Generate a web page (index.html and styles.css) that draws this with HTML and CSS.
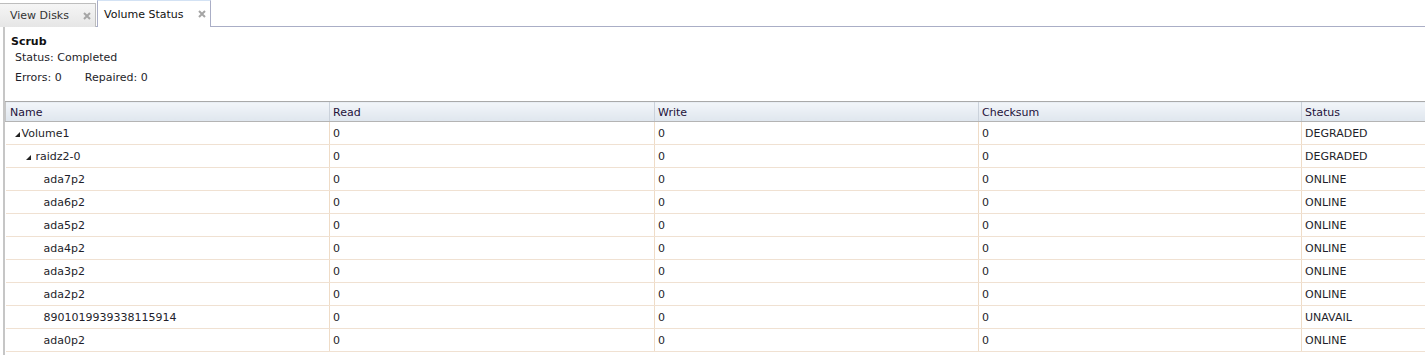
FILE: index.html
```html
<!DOCTYPE html>
<html>

<head>
    <meta charset="utf-8" />
    <title>Volume Status</title>
    <link rel="stylesheet" href="styles.css">
</head>

<body>
    <div class="tabs">
        <div class="tab">
            <span>View Disks</span>
            <svg class="close" width="8" height="8" viewBox="0 0 8 8"><path d="M1 1L7 7M7 1L1 7" /></svg>
        </div>
        <div class="tab active">
            <span>Volume Status</span>
            <svg class="close" width="8" height="8" viewBox="0 0 8 8"><path d="M1 1L7 7M7 1L1 7" /></svg>
        </div>
    </div>
    <div class="panel">
        <div class="summary">
            <div class="scrub">Scrub</div>
            <div class="status-line">Status: Completed</div>
            <div class="counts">
                <span>Errors: 0</span>
                <span>Repaired: 0</span>
            </div>
        </div>
        <table class="grid">
            <colgroup>
                <col class="c-name">
                <col class="c-read">
                <col class="c-write">
                <col class="c-sum">
                <col>
            </colgroup>
            <thead>
                <tr>
                    <th>Name</th>
                    <th>Read</th>
                    <th>Write</th>
                    <th>Checksum</th>
                    <th>Status</th>
                </tr>
            </thead>
            <tbody>
                <tr>
                    <td class="lvl0"><svg class="arrow" width="5" height="5" viewBox="0 0 5 5"><polygon points="5,0 5,5 0,5" /></svg>Volume1</td>
                    <td>0</td><td>0</td><td>0</td><td>DEGRADED</td>
                </tr>
                <tr>
                    <td class="lvl1"><svg class="arrow" width="5" height="5" viewBox="0 0 5 5"><polygon points="5,0 5,5 0,5" /></svg>raidz2-0</td>
                    <td>0</td><td>0</td><td>0</td><td>DEGRADED</td>
                </tr>
                <tr><td class="lvl2">ada7p2</td><td>0</td><td>0</td><td>0</td><td>ONLINE</td></tr>
                <tr><td class="lvl2">ada6p2</td><td>0</td><td>0</td><td>0</td><td>ONLINE</td></tr>
                <tr><td class="lvl2">ada5p2</td><td>0</td><td>0</td><td>0</td><td>ONLINE</td></tr>
                <tr><td class="lvl2">ada4p2</td><td>0</td><td>0</td><td>0</td><td>ONLINE</td></tr>
                <tr><td class="lvl2">ada3p2</td><td>0</td><td>0</td><td>0</td><td>ONLINE</td></tr>
                <tr><td class="lvl2">ada2p2</td><td>0</td><td>0</td><td>0</td><td>ONLINE</td></tr>
                <tr><td class="lvl2">8901019939338115914</td><td>0</td><td>0</td><td>0</td><td>UNAVAIL</td></tr>
                <tr><td class="lvl2">ada0p2</td><td>0</td><td>0</td><td>0</td><td>ONLINE</td></tr>
            </tbody>
        </table>
    </div>
</body>

</html>
```

FILE: styles.css
```css
* {
    box-sizing: border-box;
}

html,
body {
    margin: 0;
    height: 100%;
    overflow: hidden;
    background-color: #fff;
}

body {
    font-family: "DejaVu Sans", Verdana, sans-serif;
    font-size: 11px;
    color: #1e1e2a;
}

.tabs {
    display: flex;
    align-items: flex-end;
    height: 27px;
    border-bottom: 1px solid #aaaec6;
    gap: 1px;
}

.tab {
    display: flex;
    align-items: center;
    justify-content: space-between;
    white-space: nowrap;
    flex: none;
    width: 96px;
    height: 24px;
    padding: 0 4px 0 10px;
    background: linear-gradient(#f5f5f5, #e6e6e6);
    border: 1px solid #bdbdbd;
    border-left: none;
    border-bottom: none;
    color: #333;
    margin-bottom: -1px;
}

.tab.active {
    width: 114px;
    height: 27px;
    padding: 0 4px 0 6px;
    background: #fff;
    border-color: #aaaec6;
    border-left: 1px solid #aaaec6;
    border-top: 1px solid #d3e2f4;
    color: #111;
}

.close {
    display: block;
    stroke: #a5a5a5;
    stroke-width: 2;
}

.panel {
    margin-left: 3px;
    border-left: 2px solid #c6c6c6;
    height: 100%;
}

.summary {
    padding: 8px 0 16px 6px;
    line-height: 14px;
}

.scrub {
    font-weight: bold;
    color: #111;
}

.status-line {
    margin-top: 2px;
    padding-left: 4px;
}

.counts {
    margin-top: 6px;
    padding-left: 4px;
    display: flex;
    gap: 23px;
}

.grid {
    border-collapse: collapse;
    table-layout: fixed;
    width: 1440px;
}

.c-name {
    width: 324px;
}

.c-read {
    width: 325px;
}

.c-write {
    width: 324px;
}

.c-sum {
    width: 323px;
}

.grid th {
    height: 20px;
    padding: 1px 3px 0;
    text-align: left;
    font-weight: normal;
    color: #24123a;
    background: linear-gradient(#f2f5f9, #dfe6ee);
    border-top: 1px solid #a9a9a9;
    border-bottom: 1px solid #b4b4b4;
    border-left: 1px solid #cbd2db;
}

.grid th:first-child {
    padding-left: 4px;
    border-left: 1px solid #c6c6c6;
}

.grid td {
    height: 23px;
    padding: 0 3px;
    border-bottom: 1px solid #f0e1d2;
    border-left: 1px solid #efdcc7;
    white-space: nowrap;
}

.grid td:first-child {
    border-left: none;
}

.arrow {
    fill: #222;
    vertical-align: 0;
}

.grid td.lvl0 {
    padding-left: 9px;
}

.grid td.lvl0 .arrow {
    margin-right: 2px;
}

.grid td.lvl1 {
    padding-left: 20px;
}

.grid td.lvl1 .arrow {
    margin-right: 5px;
}

.grid td.lvl2 {
    padding-left: 38px;
}
```
